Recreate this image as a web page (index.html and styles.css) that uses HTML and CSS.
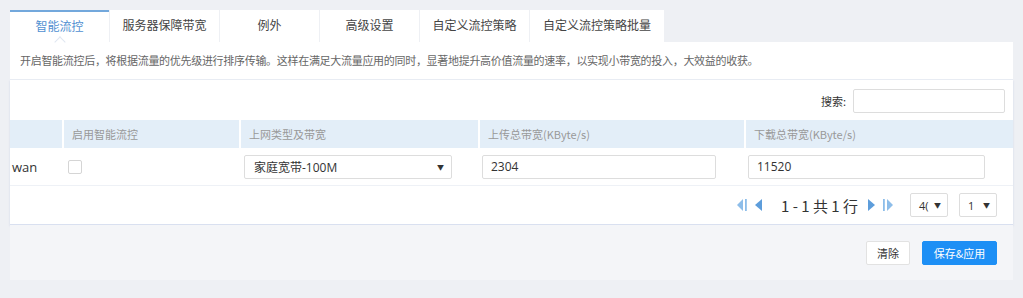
FILE: index.html
```html
<!DOCTYPE html>
<html lang="zh-CN">
  <head>
    <meta charset="UTF-8" />
    <meta name="viewport" content="width=device-width, initial-scale=1.0" />
    <title>智能流控</title>
    <link rel="stylesheet" href="styles.css">
  </head>
  <body>
    <div class="wrap">
      <ul class="tabs">
        <li class="tab active">智能流控</li>
        <li class="tab w110">服务器保障带宽</li>
        <li class="tab">例外</li>
        <li class="tab">高级设置</li>
        <li class="tab w110">自定义流控策略</li>
        <li class="tab w134">自定义流控策略批量</li>
      </ul>

      <div class="desc">
        开启智能流控后，将根据流量的优先级进行排序传输。这样在满足大流量应用的同时，显著地提升高价值流量的速率，以实现小带宽的投入，大效益的收获。
      </div>

      <div class="card">
        <div class="toolbar">
          <label for="search">搜索:</label>
          <input type="text" id="search" class="search-input">
        </div>

        <table class="grid">
          <colgroup>
            <col class="c-name">
            <col class="c-check">
            <col class="c-type">
            <col class="c-up">
            <col>
          </colgroup>
          <thead>
            <tr>
              <th class="first"></th>
              <th>启用智能流控</th>
              <th>上网类型及带宽</th>
              <th>上传总带宽(KByte/s)</th>
              <th>下载总带宽(KByte/s)</th>
            </tr>
          </thead>
          <tbody>
            <tr>
              <td class="name">wan</td>
              <td><span class="checkbox"></span></td>
              <td>
                <div class="select wide">家庭宽带-100M<span class="arrow">▼</span></div>
              </td>
              <td><input type="text" class="field" value="2304"></td>
              <td><input type="text" class="field last" value="11520"></td>
            </tr>
          </tbody>
        </table>

        <div class="pager">
          <svg class="pg-icon" width="11" height="14" viewBox="0 0 11 14">
            <polygon points="6,1 6,13 0,7" fill="#8dbde9" />
            <rect x="8" y="1" width="1.8" height="12" fill="#8dbde9" />
          </svg>
          <svg class="pg-icon" width="9" height="14" viewBox="0 0 9 14">
            <polygon points="8,1 8,13 1,7" fill="#5d9ddb" />
          </svg>
          <span class="pg-text">1 - 1 共 1 行</span>
          <svg class="pg-icon" width="9" height="14" viewBox="0 0 9 14">
            <polygon points="1,1 1,13 8,7" fill="#5d9ddb" />
          </svg>
          <svg class="pg-icon" width="11" height="14" viewBox="0 0 11 14">
            <rect x="1" y="1" width="1.8" height="12" fill="#8dbde9" />
            <polygon points="5,1 5,13 11,7" fill="#8dbde9" />
          </svg>
          <div class="select small">4(<span class="arrow">▼</span></div>
          <div class="select small">1<span class="arrow">▼</span></div>
        </div>
      </div>

      <div class="actions">
        <button type="button" class="btn">清除</button>
        <button type="button" class="btn primary">保存&amp;应用</button>
      </div>
    </div>
  </body>
</html>
```

FILE: styles.css
```css
body {
  margin: 0;
  background-color: #eef0f4;
  font-family: "Open Sans", "Noto Sans CJK SC", sans-serif;
  color: #333333;
}
.wrap {
  width: 1003px;
  margin: 10px 0 0 10px;
}
.tabs {
  display: flex;
  margin: 0;
  padding: 0;
  list-style: none;
  height: 32px;
}
.tab {
  width: 99px;
  margin-right: 1px;
  background-color: #ffffff;
  font-size: 12px;
  line-height: 32px;
  text-align: center;
  color: #444444;
}
.tab.w110 {
  width: 109px;
}
.tab.w134 {
  width: 134px;
}
.tab.active {
  color: #4f8fd1;
  border-top: 2px solid #73a8dc;
  line-height: 30px;
}
.desc {
  position: relative;
  height: 37px;
  padding-left: 10px;
  background-color: #ffffff;
  border-bottom: 1px solid #e8ecf3;
  font-family: "Noto Sans CJK SC", sans-serif;
  font-size: 11px;
  letter-spacing: -0.3px;
  line-height: 37px;
  color: #666666;
}
.desc::before {
  content: "";
  position: absolute;
  left: 46px;
  top: -4px;
  width: 7px;
  height: 7px;
  background: #ffffff;
  border-left: 1px solid #dfe6f0;
  border-top: 1px solid #dfe6f0;
  transform: rotate(45deg);
}
.card {
  background-color: #ffffff;
  border-bottom: 1px solid #d9e0f0;
  box-shadow: 0 1px 2px rgba(120, 140, 200, 0.25);
}
.toolbar {
  display: flex;
  justify-content: flex-end;
  align-items: center;
  padding: 9px 8px 7px 0;
}
.toolbar label {
  font-family: "Noto Sans CJK SC", sans-serif;
  font-size: 11px;
  margin-right: 7px;
  color: #333333;
}
.search-input {
  width: 150px;
  height: 22px;
  padding: 0;
  border: 1px solid #dddddd;
  border-radius: 2px;
}
.grid {
  width: 100%;
  border-collapse: collapse;
  table-layout: fixed;
}
.c-name {
  width: 53px;
}
.c-check {
  width: 177px;
}
.c-type {
  width: 239px;
}
.c-up {
  width: 266px;
}
.grid th {
  height: 28px;
  padding: 0 0 0 8px;
  background-color: #e3eef8;
  border-left: 2px solid #ffffff;
  font-family: "Noto Sans CJK SC", sans-serif;
  font-size: 11px;
  font-weight: normal;
  color: #999999;
  text-align: left;
}
.grid th.first {
  border-left: none;
}
.grid td {
  height: 37px;
  padding: 0 0 0 3px;
  border-bottom: 1px solid #eef1f6;
}
.grid td.name {
  padding-left: 2px;
  font-size: 13px;
}
.checkbox {
  display: block;
  margin-left: 2px;
  width: 12px;
  height: 12px;
  border: 1px solid #d5d5d5;
  border-radius: 2px;
}
.select {
  display: flex;
  align-items: center;
  justify-content: space-between;
  box-sizing: border-box;
  height: 24px;
  border: 1px solid #dddddd;
  border-radius: 2px;
  background-color: #ffffff;
  font-family: "Open Sans", "Noto Sans CJK SC", sans-serif;
  font-size: 12px;
  color: #333333;
}
.select.wide {
  width: 208px;
  margin-left: 1px;
  padding: 0 7px 0 9px;
}
.arrow {
  font-size: 7px;
  color: #333333;
}
.field {
  box-sizing: border-box;
  width: 234px;
  height: 24px;
  padding: 0 8px;
  border: 1px solid #dddddd;
  border-radius: 2px;
  font-family: "Open Sans", sans-serif;
  font-size: 12px;
  color: #333333;
}
.field.last {
  width: 237px;
}
.pager {
  display: flex;
  justify-content: flex-end;
  align-items: center;
  height: 38px;
  padding-right: 16px;
}
.pg-icon {
  margin-right: 6px;
}
.pg-text {
  margin: 0 9px 0 12px;
  font-family: "Noto Sans CJK SC", sans-serif;
  font-size: 15px;
  color: #333333;
}
.select.small {
  width: 38px;
  margin-left: 11px;
  padding: 0 6px 0 8px;
  font-size: 11px;
}
.actions {
  display: flex;
  justify-content: flex-end;
  align-items: center;
  height: 55px;
  padding-right: 16px;
  background-color: #f4f5f8;
}
.btn {
  height: 24px;
  padding: 0 10px;
  margin-left: 12px;
  border: 1px solid #e2e2e2;
  border-radius: 2px;
  background-color: #ffffff;
  font-family: "Noto Sans CJK SC", sans-serif;
  font-size: 11px;
  color: #333333;
}
.btn.primary {
  width: 75px;
  background-color: #1d8ff5;
  border-color: #1d8ff5;
  color: #ffffff;
}
```
